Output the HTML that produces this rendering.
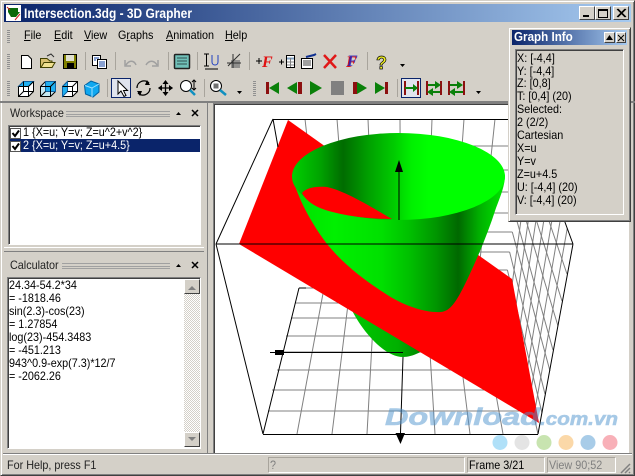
<!DOCTYPE html>
<html><head><meta charset="utf-8"><style>
html,body{margin:0;padding:0;background:#d4d0c8}
#r{position:relative;width:635px;height:476px;overflow:hidden;background:#d4d0c8;font:12px "Liberation Sans",sans-serif;color:#000}
#r div,#r span.t{position:absolute;white-space:nowrap;box-sizing:border-box}
.t{line-height:13px;transform:scaleX(.9);transform-origin:0 0}
.sunk{border:1px solid;border-color:#808080 #fff #fff #808080;box-shadow:inset 1px 1px 0 #404040}
.btn{background:#d4d0c8;border:1px solid;border-color:#fff #404040 #404040 #fff}
u{text-decoration:underline}
svg{position:absolute;left:0;top:0}
</style></head><body><div id="r">
<div style="left:0;top:0;width:635px;height:476px;border:1px solid;border-color:#d4d0c8 #404040 #404040 #d4d0c8;box-shadow:inset 1px 1px 0 #fff,inset -1px -1px 0 #808080"></div>
<div style="left:4px;top:4px;width:627px;height:18px;background:linear-gradient(90deg,#0a246a,#a6caf0)"></div>
<span class="t" style="left:24px;top:6px;color:#fff;font-weight:bold;font-size:13.5px;line-height:15px;transform:scaleX(.885)">Intersection.3dg - 3D Grapher</span>
<div class="btn" style="left:579px;top:6px;width:16px;height:14px"></div>
<div class="btn" style="left:595px;top:6px;width:16px;height:14px"></div>
<div class="btn" style="left:613px;top:6px;width:16px;height:14px"></div>
<span class="t" style="left:24px;top:29px"><u>F</u>ile</span>
<span class="t" style="left:54px;top:29px"><u>E</u>dit</span>
<span class="t" style="left:84px;top:29px"><u>V</u>iew</span>
<span class="t" style="left:118px;top:29px">G<u>r</u>aphs</span>
<span class="t" style="left:166px;top:29px"><u>A</u>nimation</span>
<span class="t" style="left:225px;top:29px"><u>H</u>elp</span>

<div style="left:0;top:101px;width:635px;height:2px;background:#808080"></div>

<!-- left panel -->
<span class="t" style="left:10px;top:107px;color:#222">Workspace</span>
<div style="left:66px;top:111px;width:104px;height:6px;border-top:1px solid #a0a0a0;border-bottom:1px solid #a0a0a0;background:linear-gradient(#a0a0a0,#a0a0a0) 0 50%/100% 1px no-repeat"></div>
<div class="sunk" style="left:8px;top:125px;width:193px;height:120px;background:#fff"></div>
<div style="left:10px;top:139px;width:190px;height:13px;background:#0a246a"></div>
<span class="t" style="left:23px;top:126px">1 {X=u; Y=v; Z=u^2+v^2}</span>
<span class="t" style="left:23px;top:139px;color:#fff">2 {X=u; Y=v; Z=u+4.5}</span>
<div style="left:4px;top:247px;width:200px;height:5px;border-top:1px solid #fff;border-bottom:1px solid #808080"></div>
<span class="t" style="left:10px;top:259px;color:#222">Calculator</span>
<div style="left:62px;top:263px;width:108px;height:6px;border-top:1px solid #a0a0a0;border-bottom:1px solid #a0a0a0;background:linear-gradient(#a0a0a0,#a0a0a0) 0 50%/100% 1px no-repeat"></div>
<div class="sunk" style="left:7px;top:277px;width:194px;height:172px;background:#fff"></div>
<div style="left:184px;top:279px;width:16px;height:168px;background:repeating-conic-gradient(#d4d0c8 0 25%,#fff 0 50%) 0 0/2px 2px"></div>
<div class="btn" style="left:184px;top:279px;width:16px;height:15px"></div>
<div class="btn" style="left:184px;top:432px;width:16px;height:15px"></div>
<span class="t" style="left:9px;top:279px">24.34-54.2*34</span>
<span class="t" style="left:9px;top:292px">= -1818.46</span>
<span class="t" style="left:9px;top:305px">sin(2.3)-cos(23)</span>
<span class="t" style="left:9px;top:318px">= 1.27854</span>
<span class="t" style="left:9px;top:331px">log(23)-454.3483</span>
<span class="t" style="left:9px;top:344px">= -451.213</span>
<span class="t" style="left:9px;top:357px">943^0.9-exp(7.3)*12/7</span>
<span class="t" style="left:9px;top:370px">= -2062.26</span>
<div style="left:207px;top:103px;width:1px;height:350px;background:#808080"></div>

<!-- view -->
<div style="left:213px;top:103px;width:417px;height:351px;background:#fff;border:1px solid;border-color:#808080 #d4d0c8 #d4d0c8 #808080;box-shadow:inset 1px 1px 0 #404040"></div>

<svg width="635" height="476" viewBox="0 0 635 476" fill="none">
<defs>
<linearGradient id="gi" gradientUnits="userSpaceOnUse" x1="292" x2="505" y1="0" y2="0">
<stop offset="0" stop-color="#00d000"/><stop offset=".13" stop-color="#00a400"/><stop offset=".24" stop-color="#006c00"/><stop offset=".36" stop-color="#00a000"/><stop offset=".48" stop-color="#00cc00"/><stop offset=".56" stop-color="#00f000"/><stop offset=".64" stop-color="#00ff00"/><stop offset="1" stop-color="#00ff00"/>
</linearGradient>
<linearGradient id="go" gradientUnits="userSpaceOnUse" x1="292" x2="505" y1="0" y2="0">
<stop offset="0" stop-color="#00e000"/><stop offset=".2" stop-color="#00f000"/><stop offset=".42" stop-color="#00e000"/><stop offset=".55" stop-color="#00c000"/><stop offset=".68" stop-color="#009400"/><stop offset=".78" stop-color="#006800"/><stop offset=".88" stop-color="#00b000"/><stop offset="1" stop-color="#00e800"/>
</linearGradient>
<linearGradient id="gl" gradientUnits="userSpaceOnUse" x1="350" x2="430" y1="0" y2="0">
<stop offset="0" stop-color="#00c800"/><stop offset=".6" stop-color="#00b000"/><stop offset="1" stop-color="#007800"/>
</linearGradient>
</defs>
<!-- graph walls -->
<g stroke="#808080" stroke-width="1">
<path d="M305 119L324 288M337 119L350 288M368 119L375 288M400 119L401 288M432 119L426 288M464 119L452 288M495 119L477 288"/>
<path d="M277 146H523.500M281 170H520.400M284 192H517.500M288 213H514.700M290 232H512.300M293.500 252H509.600M296 270H507.400"/>
<path d="M299 288H505M295 303H508M291 318H512M286 336H516M282 352H520M277 370H524M272 390H529M268 411H533"/>
<path d="M297 434L324 288M332 434L350 288M367 434L375 288M435 434L426 288M470 434L452 288M503 434L477 288"/>
<!-- right wall -->
<path d="M532.750 134.600L509.100 306.250M538.500 150.250L513.250 324.500M544.250 165.900L517.400 342.750M550 181.500L521.500 361M555.750 197.100L525.600 379.250M561.500 212.750L529.750 397.500M567.250 228.400L533.900 415.750"/>
<path d="M523.500 146L567 274M520.400 170L562 301M517.500 192L558 326M514.700 213L553 350M512.300 232L550 371M509.600 252L545 394M507.400 270L542 413"/>
<path d="M505 288L538 434"/>
</g>
<!-- lower bowl piece -->
<path d="M348 302C360 330 384 357 403 357C413 357 424 351 436 342Z" fill="url(#gl)"/>
<!-- red plane -->
<path d="M288 120L239 244L539 423L512 279Z" fill="#f00"/>
<!-- bowl -->
<path d="M292 175C296 192 306 216 327 244C345 266 367 282 389 296C407 307 427 313 441 312C450 311 456 303 467 280C478 257 488 233 496 208C501 195 505 185 505 175Z" fill="url(#go)"/>
<ellipse cx="398.500" cy="176.500" rx="106.500" ry="43.500" fill="url(#gi)"/>
<path d="M302 193C306 188 315 186 327 187C345 191 368 205 392 219C365 219 338 215 320 208C311 204 305 199 302 193Z" fill="#f00"/>
<!-- axes and frame -->
<g stroke="#000" stroke-width="1">
<path d="M273 119.500H527M273 119L216 244M527 119L573 244M216 244H573M216 244L263 434M573 244L538 434M263 434.500H538M299 288L263 434M273 119L278 147M299 288H306"/>
<path d="M399 172V220M403 357L400.500 433M270 352.500H403"/>
</g>
<path d="M399 160L395 172H403ZM395.500 433H405L400.500 444ZM275 350H284V355H275Z" fill="#000"/>
<!-- watermark -->
<g font-family="Liberation Sans" font-weight="bold" font-style="italic" fill="#4f94cf" stroke="#4f94cf" stroke-width=".6" opacity=".5">
<text x="385" y="425" font-size="24" textLength="155" lengthAdjust="spacingAndGlyphs">Download</text>
<text x="540" y="425" font-size="18" textLength="78" lengthAdjust="spacingAndGlyphs">.com.vn</text>
</g>
<circle cx="500" cy="442.500" r="7.500" fill="#b0e0f8"/><circle cx="522" cy="442.500" r="7.500" fill="#e4e4e4"/><circle cx="544" cy="442.500" r="7.500" fill="#c8e4b0"/><circle cx="566" cy="442.500" r="7.500" fill="#fbd8a8"/><circle cx="588" cy="442.500" r="7.500" fill="#a8cce8"/><circle cx="610" cy="442.500" r="7.500" fill="#f8b0b8"/>

<!-- grips -->
<g stroke="#909090" stroke-dasharray="1 1" stroke-width="3">
<path d="M8.500 30V43M8.500 54V69M8.500 81V96M254.500 81V96"/>
</g>
<!-- separators -->
<path d="M85.500 52V70M115.500 52V70M168.500 52V70M197.500 52V70M249.500 52V70M367.500 52V70M107.500 79V97M204.500 79V97M397.500 79V97" stroke="#a8a49c"/>

<!-- title icon -->
<rect x="6" y="5" width="15" height="16" fill="#fff"/>
<path d="M8 8H18V12H20L16 17H11L8 12Z" fill="#0a6a0a"/><path d="M7 7L10 10M15 20L20 14" stroke="#d02020"/>
<!-- window buttons -->
<path d="M583 16H589" stroke="#000" stroke-width="2"/>
<path d="M598.500 9.500H607.500V17.500H598.500Z" stroke="#000"/><path d="M598 10H608" stroke="#000" stroke-width="2"/>
<path d="M617 9L625 17M625 9L617 17M618 9L626 17M626 9L618 17" stroke="#000"/>

<!-- row 1 -->
<path d="M21.500 55.500H28L31.500 59V68.500H21.500Z" fill="#fff" stroke="#000"/>
<path d="M40.500 58.500H47L50 61H52V67.500H40.500Z" fill="#d8c070" stroke="#404000"/><path d="M41 67.500L44 62.500H55L52 67.500Z" fill="#f0e090" stroke="#404000"/><path d="M47 56L51 54L54 57" stroke="#303030"/>
<rect x="63.500" y="54.500" width="13" height="14" fill="#808000" stroke="#000"/><rect x="66" y="55" width="8" height="6" fill="#e0e0d0"/><rect x="67" y="63" width="7" height="5" fill="#000"/>
<rect x="92.500" y="55.500" width="8" height="10" fill="#fff" stroke="#000"/><rect x="97.500" y="59.500" width="9" height="9" fill="#fff" stroke="#000"/><path d="M99 62H105M99 64H105M99 66H105M94 58H99M94 60H96" stroke="#1040a0"/>
<path d="M125 60V66H131M126 65C129 60 134 60 136 65" stroke="#a0a0a0" stroke-width="1.500"/>
<path d="M158 60V66H152M157 65C154 60 149 60 146 65" stroke="#a0a0a0" stroke-width="1.500"/>
<rect x="174.500" y="54.500" width="15" height="14" rx="1" fill="#70c0b8" stroke="#202020" stroke-width="1.500"/><path d="M177 58H187M177 61H187M177 64H187" stroke="#305050"/>
<path d="M204 54H209M206.500 54V66M204 66H209" stroke="#000"/><path d="M212 55V62C212 66 218 66 218 62V55" stroke="#2040c0"/><path d="M205 69H218" stroke="#000"/>
<path d="M231 60H240V68H231Z" fill="#808080" opacity=".8"/><path d="M228 66L240 54M233 54V68M227 63H241" stroke="#303030"/>
<path d="M256 61H262M259 58V64" stroke="#000"/>
<text x="262" y="67" font-family="Liberation Serif" font-weight="bold" font-style="italic" font-size="16" fill="#e01010">F</text>
<path d="M279 62H284M281.500 59.500V64.500" stroke="#000"/>
<rect x="286.500" y="55.500" width="8" height="12" fill="#fff" stroke="#000"/><path d="M287 58.500H294" stroke="#80a0c0" stroke-width="2"/><path d="M287 62H294M287 65H294M290.500 58V67" stroke="#808080"/>
<rect x="301.500" y="58.500" width="11" height="10" fill="#fff" stroke="#000"/><path d="M303 61H311M303 63H311M303 65H311" stroke="#404040"/><path d="M306 57L314 55L316 54" stroke="#103090" stroke-width="2"/>
<path d="M324 55L336 68M336 55L324 68" stroke="#e01818" stroke-width="2.500"/>
<text x="346" y="67" font-family="Liberation Serif" font-weight="bold" font-style="italic" font-size="16" fill="#e01010">F</text>
<text x="347" y="66" font-family="Liberation Serif" font-weight="bold" font-style="italic" font-size="16" fill="#2020c0" opacity=".8">F</text>
<text x="376" y="69" font-family="Liberation Sans" font-weight="bold" font-size="18" fill="#f0f020" stroke="#000" stroke-width=".7">?</text>
<path d="M400 64H405L402.500 67ZM237 91H242L239.500 94ZM476 91H481L478.500 94Z" fill="#000"/>

<!-- row 2 cubes -->
<g stroke="#000">
<path d="M18.500 86.500L23.500 81.500H33.500V91.500L28.500 96.500H18.500Z" fill="#fff"/><path d="M18.500 86.500H28.500L33.500 81.500H23.500Z" fill="#20b0f0" stroke="#1060a0"/><path d="M18.500 86.500H28.500V96.500M28.500 86.500L33.500 81.500M23.500 81.500V91.500H33.500M23.500 91.500L18.500 96.500"/>
<path d="M40.500 86.500L45.500 81.500H55.500V91.500L50.500 96.500H40.500Z" fill="#c8e8f0"/><path d="M45.500 81.500H55.500V91.500H45.500Z" fill="#20b0f0" stroke="#1060a0"/><path d="M40.500 86.500H50.500V96.500M50.500 86.500L55.500 81.500M45.500 91.500L40.500 96.500" fill="none"/>
<path d="M62.500 86.500L67.500 81.500H77.500V91.500L72.500 96.500H62.500Z" fill="#fff"/><path d="M62.500 86.500L67.500 81.500V91.500L62.500 96.500Z" fill="#20b0f0" stroke="#1060a0"/><path d="M62.500 86.500H72.500V96.500M72.500 86.500L77.500 81.500M67.500 91.500H77.500" fill="none"/>
</g>
<path d="M84.500 85.500L91 81L99 84V92L93 97L85.500 94Z" fill="#10a8f0" stroke="#0060a0"/><path d="M85 85.500L92 88V97M92 88L99 84" stroke="#a0e0ff"/>
<!-- cursor button -->
<rect x="111.500" y="78.500" width="19" height="19" fill="#e0e4ee" stroke="#0a246a"/>
<path d="M118 81V94L121 91L124 96.500L126 95.500L123.500 90.500H127.500Z" fill="#fff" stroke="#000"/>
<path d="M137 88A7 7 0 0 1 149 83M150 88A7 7 0 0 1 138 93" stroke="#000" stroke-width="1.300"/><path d="M147 80L150 85L145 85ZM140 96L137 91L142 91Z" fill="#000"/>
<path d="M158.500 88H172.500M165.500 81V95" stroke="#000" stroke-width="1.300"/><path d="M165.500 80L162.500 84H168.500ZM165.500 96L162.500 92H168.500ZM158 88L162 85V91ZM173 88L169 85V91Z" fill="#000"/>
<circle cx="186" cy="86" r="5.500" fill="#fff" stroke="#000"/><path d="M190 90L195 95" stroke="#1090c0" stroke-width="2.500"/><path d="M194 80V90M192 82L194 80L196 82M192 88L194 90L196 88" stroke="#000"/>
<circle cx="216" cy="86" r="5.500" fill="#fff" stroke="#000"/><rect x="213.500" y="83.500" width="5" height="5" fill="#707070"/><path d="M220 90L226 95" stroke="#1090c0" stroke-width="2.500"/>
<!-- animation -->
<g fill="#0a800a">
<path d="M279 82V94L269 88Z"/><path d="M297 82V94L287 88Z"/><path d="M310 81V95L322 88Z"/><path d="M357 82L367 88L357 94Z"/><path d="M375 82L385 88L375 94Z"/>
</g>
<g fill="#8c1010"><rect x="266" y="82" width="3" height="12"/><rect x="298" y="82" width="4" height="12"/><rect x="353" y="82" width="4" height="12"/><rect x="385" y="82" width="3" height="12"/></g>
<rect x="331" y="81" width="13" height="14" fill="#808080"/>
<!-- mode buttons -->
<rect x="401.500" y="78.500" width="19" height="19" fill="#e0e4ee" stroke="#0a246a"/>
<g stroke="#8c1010" stroke-width="2"><path d="M405 81V95M418 81V95M427 81V95M441 81V95M449 81V95M464 81V95"/></g>
<g stroke="#0a800a" stroke-width="2"><path d="M405 88H415M428 85H437M431 92H440M450 85H459M453 92H463"/></g>
<path d="M413 84L418 88L413 92ZM435 81L441 85L435 89ZM433 88L427 92L433 96ZM457 81L463 85L457 89ZM455 88L449 92L455 96Z" fill="#0a800a"/>
<!-- workspace controls -->
<path d="M176 115H181L178.500 112ZM176 267H181L178.500 264Z" fill="#000"/>
<path d="M192 110L198 116M198 110L192 116M192 262L198 268M198 262L192 268" stroke="#000" stroke-width="1.500"/>
<!-- checkboxes -->
<rect x="10.500" y="128.500" width="10" height="10" fill="#fff" stroke="#555"/><rect x="10.500" y="141.500" width="10" height="10" fill="#fff" stroke="#555"/>
<path d="M12.500 133L15 136L19 130.500M12.500 146L15 149L19 143.500" stroke="#000" stroke-width="2"/>
<path d="M188 290L192 286L196 290ZM188 437H196L192 441Z" fill="#808080"/>
</svg>

<!-- graph info window -->
<div style="left:508px;top:27px;width:123px;height:195px;background:#d4d0c8;border:1px solid;border-color:#d4d0c8 #404040 #404040 #d4d0c8;box-shadow:inset 1px 1px 0 #fff,inset -1px -1px 0 #808080"></div>
<div style="left:512px;top:30px;width:115px;height:15px;background:linear-gradient(90deg,#0a246a,#a6caf0)"></div>
<span class="t" style="left:514px;top:31px;color:#fff;font-weight:bold;font-size:12.500px;transform:scaleX(.93)">Graph Info</span>
<div class="btn" style="left:604px;top:32px;width:11px;height:11px"></div>
<div class="btn" style="left:616px;top:32px;width:10px;height:11px"></div>
<div class="sunk" style="left:515px;top:49px;width:109px;height:166px"></div>
<span class="t" style="left:517px;top:52px">X: [-4,4]</span>
<span class="t" style="left:517px;top:65px">Y: [-4,4]</span>
<span class="t" style="left:517px;top:77px">Z: [0,8]</span>
<span class="t" style="left:517px;top:90px">T: [0,4] (20)</span>
<span class="t" style="left:517px;top:103px">Selected:</span>
<span class="t" style="left:517px;top:116px">2 (2/2)</span>
<span class="t" style="left:517px;top:129px">Cartesian</span>
<span class="t" style="left:517px;top:142px">X=u</span>
<span class="t" style="left:517px;top:155px">Y=v</span>
<span class="t" style="left:517px;top:168px">Z=u+4.5</span>
<span class="t" style="left:517px;top:181px">U: [-4,4] (20)</span>
<span class="t" style="left:517px;top:194px">V: [-4,4] (20)</span>
<svg width="635" height="476" viewBox="0 0 635 476" fill="none" style="pointer-events:none">
<path d="M606 40H613L609.500 35Z" fill="#000"/><path d="M618 35L624 41M624 35L618 41" stroke="#000"/>
</svg>

<!-- status bar -->
<div style="left:3px;top:453px;width:629px;height:1px;background:#808080"></div>
<div style="left:3px;top:454px;width:629px;height:1px;background:#fff"></div>
<span class="t" style="left:7px;top:459px;color:#222">For Help, press F1</span>
<div style="left:268px;top:457px;width:197px;height:16px;border:1px solid;border-color:#a8a49c #fff #fff #a8a49c"></div>
<span class="t" style="left:270px;top:459px;color:#808080">?</span>
<div style="left:467px;top:457px;width:78px;height:16px;border:1px solid;border-color:#a8a49c #fff #fff #a8a49c"></div>
<span class="t" style="left:469px;top:459px">Frame 3/21</span>
<div style="left:547px;top:457px;width:69px;height:16px;border:1px solid;border-color:#a8a49c #fff #fff #a8a49c"></div>
<span class="t" style="left:549px;top:459px;color:#808080">View 90;52</span>
<svg width="635" height="476" viewBox="0 0 635 476" fill="none">
<path d="M621 473L630 464M625 473L630 468M629 473L630 472" stroke="#808080" stroke-width="1.500"/>
</svg>
</div></body></html>
